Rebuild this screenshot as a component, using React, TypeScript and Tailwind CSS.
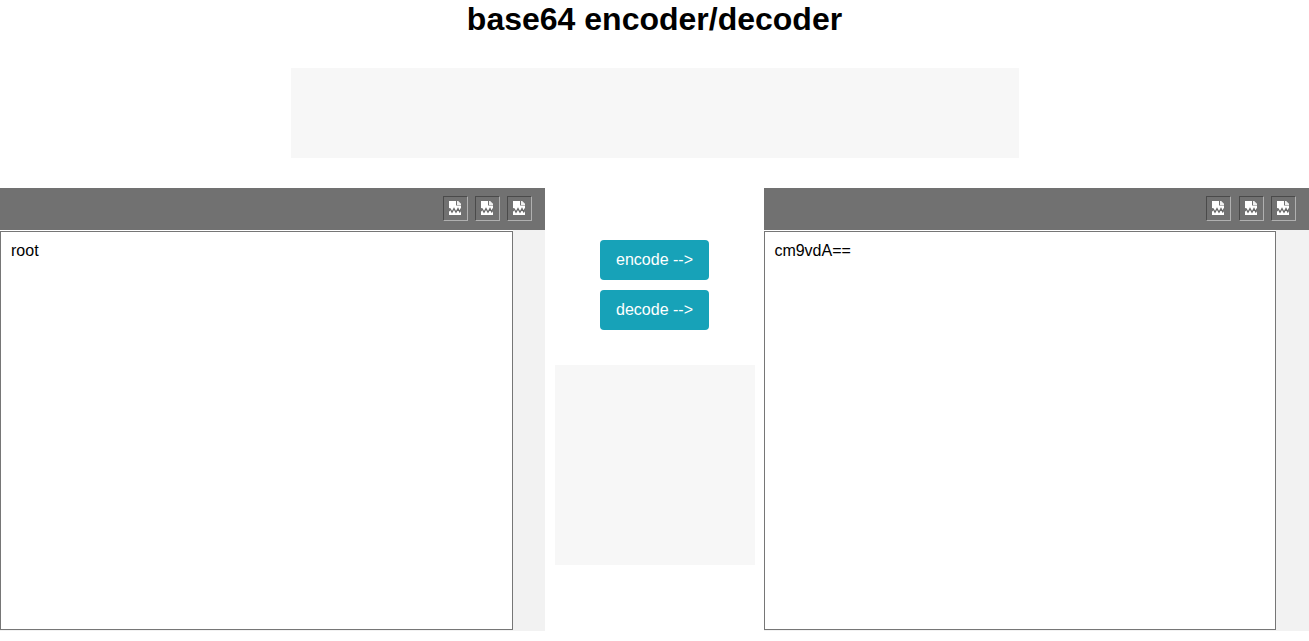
import { useState } from "react";

function BrokenImage() {
  return (
    <svg width="12" height="14" viewBox="0 0 12 14">
      <path d="M0 0h7v4.6h5V14H0z" fill="#fff" />
      <path d="M8 0h1.2L12 2.8V4H8z" fill="#f0f0f0" />
      <path d="M0 8l1.2 0L3 11.2 5 7.6 7 11.2 9 7.6l1.8 3.2L12 8.6" fill="none" stroke="#686868" strokeWidth="1.3" />
      <path d="M0 7.6h1v2.6H0zM11 7.6h1v2.6h-1z" fill="#717171" />
    </svg>
  );
}

function ToolButton({ label }: { label: string }) {
  return (
    <button
      aria-label={label}
      className="flex h-[25px] w-[25px] justify-start border border-t-[#4a4a4a] border-r-[#b0b0b0] border-b-[#b0b0b0] border-l-[#4a4a4a] pt-1 pl-[5px]"
    >
      <BrokenImage />
    </button>
  );
}

function Editor({ initial, name, right = false }: { initial: string; name: string; right?: boolean }) {
  const [value, setValue] = useState(initial);
  return (
    <section className="h-[443px] w-[545px] bg-[#f2f2f2]">
      <div className="flex h-[42px] justify-end gap-[7px] bg-[#717171] pt-2 pr-[13px]">
        <div className={right ? "mr-px" : ""}>
          <ToolButton label="Open" />
        </div>
        <ToolButton label="Save" />
        <ToolButton label="Copy" />
      </div>
      <div className={right ? "w-[512px] bg-white pt-px" : "w-[513px] bg-white pt-px"}>
        <textarea
          aria-label={name}
          spellCheck={false}
          value={value}
          onChange={(e) => setValue(e.target.value)}
          className={
            right
              ? "block h-[399px] w-full resize-none border border-[#767676] bg-white pt-[10px] pr-[10px] pl-[9.4px] text-base leading-[18px] text-black outline-none"
              : "block h-[399px] w-full resize-none border border-[#767676] bg-white px-[10px] pt-[10px] text-base leading-[18px] text-black outline-none"
          }
        />
      </div>
    </section>
  );
}

export default function App() {
  return (
    <main className="h-[641px] w-[1309px] overflow-hidden bg-white font-['Liberation_Sans',Arial,sans-serif] text-black">
      <h1 className="h-[68px] text-center text-[32px] leading-[38px] font-bold">base64 encoder/decoder</h1>
      <div className="mx-auto mb-[30px] h-[90px] w-[728px] bg-[#f7f7f7]" />
      <div className="flex">
        <Editor initial="root" name="Plain text" />
        <div className="flex w-[219px] flex-col items-center pt-[52px]">
          <button className="mb-[10px] h-10 w-[109px] rounded bg-[#17a2b8] text-base leading-10 text-white">
            encode --&gt;
          </button>
          <button className="mb-[35px] h-10 w-[109px] rounded bg-[#17a2b8] text-base leading-10 text-white">
            decode --&gt;
          </button>
          <div className="h-[200px] w-[200px] bg-[#f7f7f7]" />
        </div>
        <Editor initial="cm9vdA==" name="Encoded text" right />
      </div>
    </main>
  );
}
